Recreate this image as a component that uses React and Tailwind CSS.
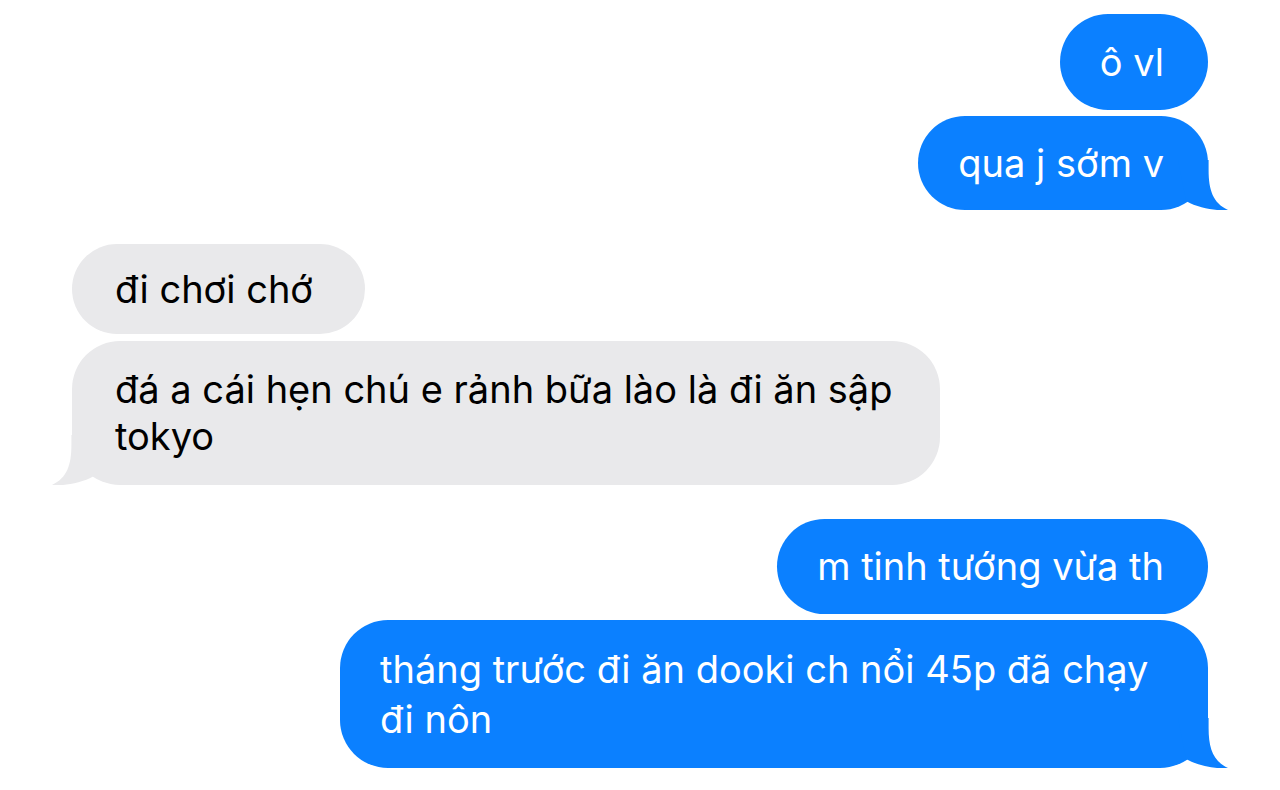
import React from 'react';

const BLUE = '#0b80ff';
const GREY = '#e9e9eb';

// iMessage-style tail, drawn for the right side; mirrored for the left
const Tail = ({ color, side = 'right' }) => (
  <svg
    viewBox="0 0 50 50"
    className={
      side === 'right'
        ? 'absolute bottom-0 -right-[20px] w-[50px] h-[50px]'
        : 'absolute bottom-0 -left-[20px] w-[50px] h-[50px] -scale-x-100'
    }
  >
    <path d="M0,0 L30.6,0 L30.6,10 C30.6,30 35,43 50,50 C40,51 22,49 8,41 L0,0 Z" fill={color} />
  </svg>
);

const Bubble = ({ from = 'me', tail = false, className = '', children }) => {
  const me = from === 'me';
  return (
    <div
      className={`relative rounded-[48px] pl-[40px] text-[38px] ${
        me ? 'bg-[#0b80ff] text-white self-end' : 'bg-[#e9e9eb] text-black self-start'
      } ${className}`}
    >
      <span className="relative z-10">{children}</span>
      {tail && <Tail color={me ? BLUE : GREY} side={me ? 'right' : 'left'} />}
    </div>
  );
};

export default function App() {
  return (
    <div
      className="w-[1280px] h-[790px] bg-white overflow-hidden flex flex-col px-[72px] pt-[14px]"
      style={{ fontFamily: 'Inter, "Noto Sans", sans-serif' }}
    >
      <Bubble className="py-[24px] pr-[44px] leading-[48px]">ô vl</Bubble>
      <Bubble tail className="mt-[6px] py-[23px] pr-[44px] leading-[48px]">qua j sớm v</Bubble>

      <Bubble from="them" className="mt-[34px] py-[21px] pl-[43px] pr-[52px] leading-[48px]">
        đi chơi chớ
      </Bubble>
      <Bubble from="them" tail className="mt-[7px] w-[868px] py-[25px] pl-[43px] pr-[44px] leading-[47px]">
        đá a cái hẹn chú e rảnh bữa lào là đi ăn sập tokyo
      </Bubble>

      <Bubble className="mt-[34px] py-[24px] pr-[44px] leading-[47px]">m tinh tướng vừa th</Bubble>
      <Bubble tail className="mt-[6px] w-[868px] py-[24px] pr-[44px] leading-[50px]">
        tháng trước đi ăn dooki ch nổi 45p đã chạy đi nôn
      </Bubble>
    </div>
  );
}
